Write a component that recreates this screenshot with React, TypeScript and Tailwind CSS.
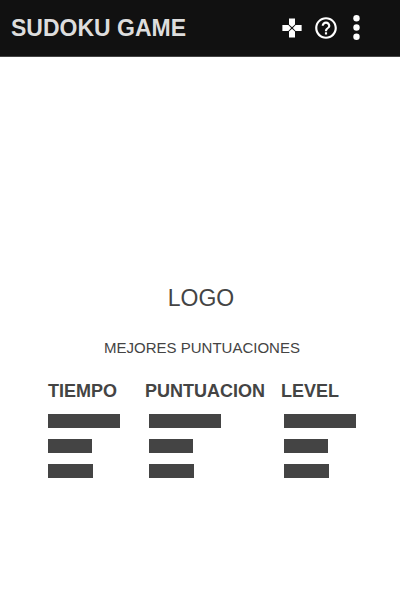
import { MdHelpOutline } from "react-icons/md";

const columns = [
  { title: "TIEMPO", width: "w-[97px]", inset: "pl-0" },
  { title: "PUNTUACION", width: "w-[136px]", inset: "pl-1" },
  { title: "LEVEL", width: "w-[75px]", inset: "pl-[3px]" },
];

const bars = ["w-[72px]", "w-[44px]", "w-[45px]"];

function GamepadIcon() {
  return (
    <svg width="20" height="20" viewBox="0 0 20 20" fill="currentColor">
      <path d="M7 .4h6v6L10 9.2 7 6.4z" />
      <path d="M7 19.6h6v-6l-3-2.8-3 2.8z" />
      <path d="M.4 7v6h6l2.8-3-2.8-3z" />
      <path d="M19.6 7v6h-6l-2.8-3 2.8-3z" />
    </svg>
  );
}

function Header() {
  return (
    <header className="flex h-[57px] items-center border-b border-[#444] bg-[#111] pr-[31px] pl-[11px] text-white">
      <h1 className="flex-1 text-[23px] leading-[26px] font-bold text-[#ddd]">SUDOKU GAME</h1>
      <nav className="flex items-center">
        <button type="button" aria-label="Jugar" className="flex w-[34px] justify-center">
          <GamepadIcon />
        </button>
        <button type="button" aria-label="Ayuda" className="flex w-[34px] justify-center">
          <MdHelpOutline size={26} />
        </button>
        <button type="button" aria-label="Menú" className="flex w-[26px] justify-center">
          <svg width="8" height="26" viewBox="0 0 8 26" fill="currentColor">
            <circle cx="4.5" cy="3.2" r="3.2" />
            <circle cx="4.5" cy="12.5" r="3.2" />
            <circle cx="4.5" cy="21.8" r="3.2" />
          </svg>
        </button>
      </nav>
    </header>
  );
}

export default function App() {
  return (
    <div className="min-h-screen bg-white font-['Liberation_Sans',Arial,sans-serif] text-[#444]">
      <Header />
      <main className="pt-[227px]">
        <h2 className="pl-0.5 text-center text-[23px] leading-7">LOGO</h2>
        <section className="mt-6 flex flex-col items-center pl-1">
          <p className="text-[15px] leading-6">MEJORES PUNTUACIONES</p>
          <table className="mt-[21px] table-fixed border-collapse">
            <thead>
              <tr>
                {columns.map((c) => (
                  <th key={c.title} className={`${c.width} p-0 pb-0.5 text-left text-[18px] leading-5 font-bold`}>
                    {c.title}
                  </th>
                ))}
              </tr>
            </thead>
            <tbody>
              {bars.map((bar) => (
                <tr key={bar}>
                  {columns.map((c) => (
                    <td key={c.title} className={`${c.inset} pt-[11px]`}>
                      <div className={`${bar} h-[14px] bg-[#444]`} />
                    </td>
                  ))}
                </tr>
              ))}
            </tbody>
          </table>
        </section>
      </main>
    </div>
  );
}
